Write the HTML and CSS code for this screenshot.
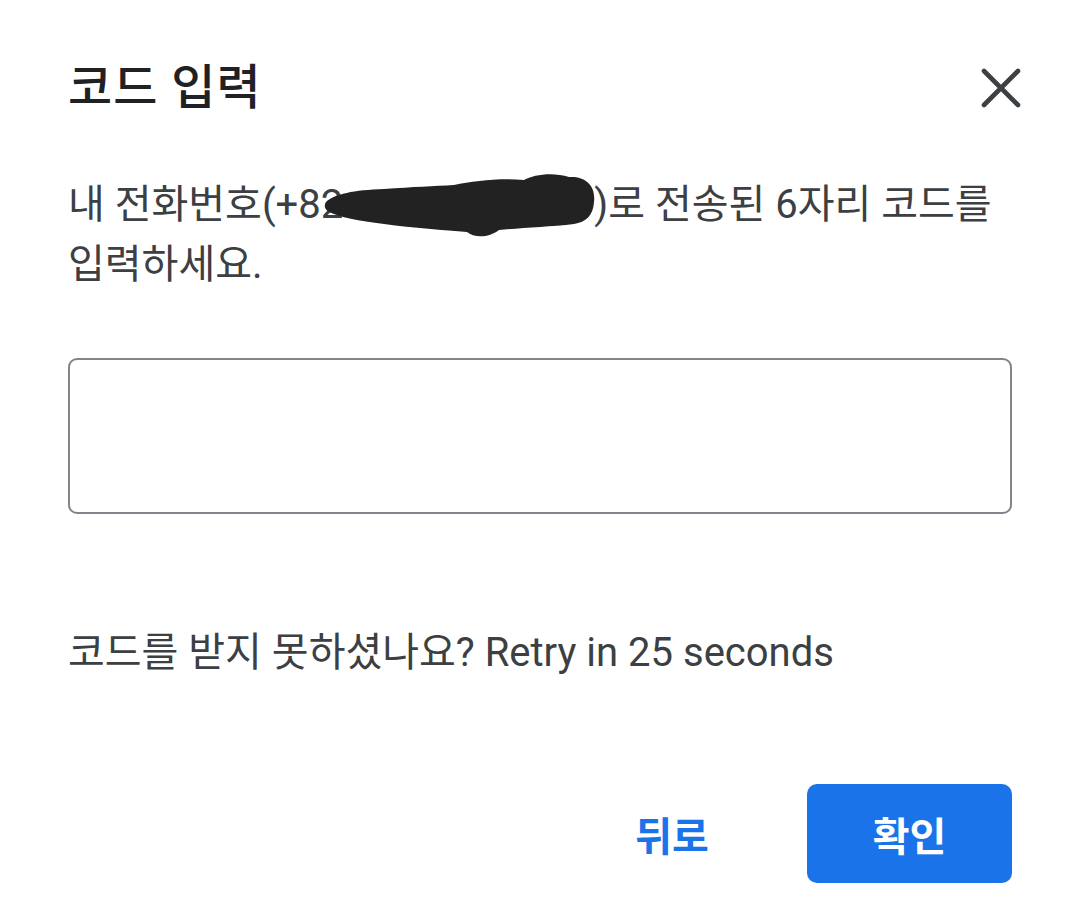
FILE: index.html
```html
<!DOCTYPE html>
<html lang="ko">
<head>
  <meta charset="UTF-8">
  <meta name="viewport" content="width=device-width, initial-scale=1.0">
  <title>코드 입력</title>
  <link rel="stylesheet" href="styles.css">
</head>
<body>
  <div class="dialog">
    <div class="dialog-head">
      <h1 class="dialog-title">코드 입력</h1>
      <button class="close-btn" aria-label="닫기">
        <svg width="40" height="40" viewBox="0 0 40 40">
          <path d="M3 3 L37 37 M37 3 L3 37" stroke="#3c4043" stroke-width="4.6" stroke-linecap="round" fill="none"/>
        </svg>
      </button>
    </div>

    <p class="desc">내 전화번호(+82<span class="redact"><svg width="276" height="66" viewBox="0 0 270 66">
        <path d="M2 30 C10 22 30 18 60 17 C90 15 110 14 130 13 C150 9 175 6 200 8 C210 2 230 0 245 5 C262 4 272 14 270 30 C269 44 262 50 250 52 C225 55 195 56 175 58 C165 66 150 66 143 60 C120 58 90 56 60 52 C35 49 15 45 5 40 C0 37 0 33 2 30 Z" fill="#222"/>
      </svg></span>)로 전송된 6자리 코드를 입력하세요.</p>

    <input class="code-input" type="text" inputmode="numeric">

    <p class="retry">코드를 받지 못하셨나요? Retry in 25 seconds</p>

    <div class="actions">
      <button class="btn-text">뒤로</button>
      <button class="btn-primary">확인</button>
    </div>
  </div>
</body>
</html>
```

FILE: styles.css
```css
body {
  margin: 0;
  background: #fff;
  font-family: Roboto, "Noto Sans CJK KR", sans-serif;
  color: #3c4043;
}

.dialog {
  padding: 60px 68px 0 68px;
}

.dialog-head {
  display: flex;
  justify-content: space-between;
  align-items: center;
  height: 56px;
}

.dialog-title {
  margin: 0;
  font-size: 48px;
  font-weight: 500;
  letter-spacing: 1px;
  line-height: 56px;
  color: #202124;
}

.close-btn {
  border: none;
  background: transparent;
  padding: 0;
  margin-right: -9px;
  display: flex;
  cursor: pointer;
}

.desc {
  margin: 59px 0 0 0;
  font-size: 40px;
  line-height: 60px;
}

.redact {
  display: inline-block;
  width: 251px;
  height: 40px;
  vertical-align: -8px;
  position: relative;
}

.redact svg {
  position: absolute;
  left: -22px;
  top: -14px;
}

.code-input {
  display: block;
  box-sizing: border-box;
  width: 100%;
  height: 156px;
  margin-top: 63px;
  border: 2px solid #80868b;
  border-radius: 9px;
  outline: none;
  font-size: 40px;
}

.retry {
  margin: 115px 0 0 0;
  font-size: 40px;
  line-height: 48px;
}

.actions {
  display: flex;
  justify-content: flex-end;
  align-items: center;
  gap: 65px;
  margin-top: 107px;
}

.btn-text {
  border: none;
  background: transparent;
  color: #1a73e8;
  font-family: inherit;
  font-size: 40px;
  font-weight: 700;
  width: 140px;
  height: 99px;
  padding: 0;
}

.btn-primary {
  border: none;
  background: #1a73e8;
  color: #fff;
  font-family: inherit;
  font-size: 40px;
  font-weight: 700;
  width: 205px;
  height: 99px;
  border-radius: 10px;
  padding: 0;
}
```
